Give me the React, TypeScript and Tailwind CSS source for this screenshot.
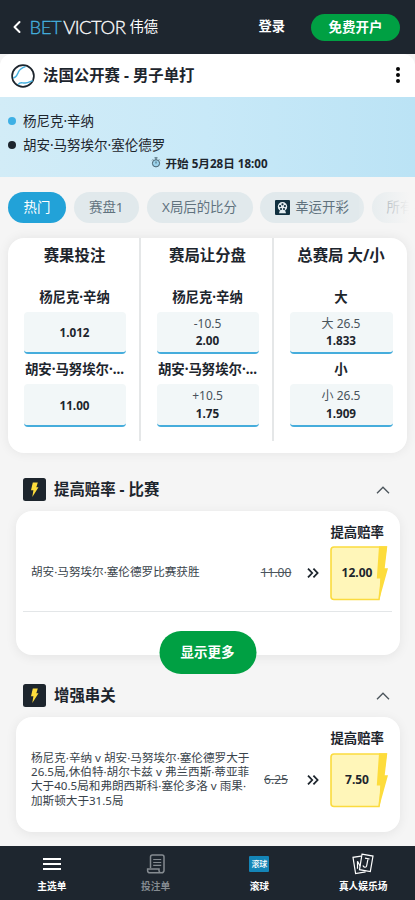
import { ChevronLeft } from 'lucide-react';

const markets = [
  {
    title: '赛果投注',
    picks: [
      { name: '杨尼克·辛纳', line: '', price: '1.012' },
      { name: '胡安·马努埃尔·...', line: '', price: '11.00' },
    ],
  },
  {
    title: '赛局让分盘',
    picks: [
      { name: '杨尼克·辛纳', line: '-10.5', price: '2.00' },
      { name: '胡安·马努埃尔·...', line: '+10.5', price: '1.75' },
    ],
  },
  {
    title: '总赛局 大/小',
    picks: [
      { name: '大', line: '大 26.5', price: '1.833' },
      { name: '小', line: '小 26.5', price: '1.909' },
    ],
  },
];

function TennisBall() {
  return (
    <svg className="w-6 h-6" viewBox="0 0 24 24" fill="none">
      <circle cx="12" cy="12" r="10.9" fill="#fff" stroke="#1d252d" strokeWidth="1.7" />
      <path d="M2.2 13.8C5.4 13.6 6.2 10.6 7.3 8.2C8.6 5 10.8 3.8 14.4 2.6" stroke="#45b0df" strokeWidth="1.5" />
      <path d="M7.2 20.6C9.4 17.2 11.4 19.4 14.2 19.1C17.6 18.8 19.2 17.4 21.8 16.6" stroke="#45b0df" strokeWidth="1.5" />
    </svg>
  );
}

function Stopwatch() {
  return (
    <svg className="w-[10px] h-[11px] -mt-[3px]" viewBox="0 0 10 11" fill="none" stroke="#47616e" strokeWidth="1">
      <circle cx="5" cy="6.3" r="3.6" fill="#9bd3ec" />
      <path d="M3.5 .8h3M5 1v1.7M5 4.5v2M8 2.4l.9.9M2 2.4l-.9.9" />
    </svg>
  );
}

function LuckyDraw() {
  return (
    <svg className="w-[15px] h-[15px]" viewBox="0 0 15 15">
      <rect width="15" height="15" rx="1" fill="#10303f" />
      <path d="M4 13.2l.8-2.4h5.4l.8 2.4z" fill="#e5eef2" />
      <circle cx="7.5" cy="6.8" r="4.7" fill="#e5eef2" />
      <circle cx="7.5" cy="4.3" r="1.1" fill="#10303f" />
      <circle cx="5.1" cy="6.1" r="1.1" fill="#10303f" />
      <circle cx="9.9" cy="6.1" r="1.1" fill="#10303f" />
      <circle cx="6" cy="9" r="1.1" fill="#10303f" />
      <circle cx="9" cy="9" r="1.1" fill="#10303f" />
    </svg>
  );
}

function BoltBadge() {
  return (
    <svg className="w-[23px] h-[23px]" viewBox="0 0 23 23">
      <rect width="23" height="23" rx="2.5" fill="#1d252d" />
      <path d="M9.8 4.5h5l-1.5 4.8h2.2L9.3 19l1.1-6.8H8z" fill="#fddc3c" />
    </svg>
  );
}

function BoostBox({ price }: { price: string }) {
  return (
    <div className="relative w-[58px] h-[55px] flex items-center">
      <svg className="absolute inset-0" width="58" height="55" viewBox="0 0 58 55">
        <path d="M4 1h52L49 53.5H4a3 3 0 0 1-3-3V4a3 3 0 0 1 3-3z" fill="#fff6b9" stroke="#fbdb3e" strokeWidth="1.6" />
        <path d="M49 .2H57.3L54.7 22.2H58L49.2 54L50.2 32.5H46.8z" fill="#fddc3c" />
      </svg>
      <span className="relative w-[54px] text-center text-[12px] font-bold">{price}</span>
    </div>
  );
}

function BoostRow({ text, oldPrice, price }: { text: string; oldPrice: string; price: string }) {
  return (
    <div className="flex items-center">
      <p className="w-[222px] -mt-[2px] text-[11.6px] leading-[14.4px] text-[#39434b]">{text}</p>
      <span className="w-[46px] text-center text-[12px] text-[#4b545b] line-through">{oldPrice}</span>
      <svg className="w-3 h-[10px] -mt-[1px] ml-[8px] mr-[11px]" viewBox="0 0 12 10" fill="none" stroke="#1d252d" strokeWidth="1.8">
        <path d="M1 .6L5.2 5L1 9.4M6.4 .6L10.6 5L6.4 9.4" />
      </svg>
      <BoostBox price={price} />
    </div>
  );
}

function SectionHead({ title }: { title: string }) {
  return (
    <div className="flex items-center h-[23px] pl-[23px] pr-[25px]">
      <BoltBadge />
      <h2 className="ml-2 flex-1 text-[15.4px] leading-[23px] font-bold">{title}</h2>
      <svg className="w-[14px] h-2" viewBox="0 0 14 8" fill="none" stroke="#4b545b" strokeWidth="1.3">
        <path d="M1 7.2L7 1.2L13 7.2" />
      </svg>
    </div>
  );
}

export default function App() {
  return (
    <div className="w-[415px] h-[900px] overflow-hidden flex flex-col bg-[#f5f5f5] text-[#1d252d] font-['Noto_Sans','Noto_Sans_CJK_SC',sans-serif]">
      {/* Top bar */}
      <header className="h-[54px] shrink-0 bg-[#1e262f] flex items-center pl-[7px] pr-[15px] text-white">
        <ChevronLeft size={20} strokeWidth={2.4} />
        <div className="ml-[2.5px] flex items-center flex-1">
          <span className="font-[Lato] font-light text-[18.5px] leading-none tracking-[-0.5px] [-webkit-text-stroke:0.3px]">
            <span className="text-[#45b0df]">BET</span>
            <span className="ml-[2px]">VICTOR</span>
          </span>
          <span className="ml-1 text-[14.3px] leading-none">伟德</span>
        </div>
        <span className="text-[13.3px] font-bold">登录</span>
        <button className="ml-[26px] w-[89px] h-[27px] rounded-full bg-[#00a043] text-[13.5px] font-bold">免费开户</button>
      </header>

      {/* Event */}
      <div className="h-[43px] shrink-0 bg-white rounded-t-xl flex items-center pl-[11px] pr-[13px]">
        <TennisBall />
        <h1 className="ml-2 flex-1 text-[15.4px] font-bold">法国公开赛 - 男子单打</h1>
        <svg className="w-[8px] h-4 -mt-[2px]" viewBox="0 0 8 16" fill="#050505">
          <circle cx="4" cy="2" r="2" />
          <circle cx="4" cy="8" r="2" />
          <circle cx="4" cy="14" r="2" />
        </svg>
      </div>
      <div className="h-20 shrink-0 bg-gradient-to-r from-[#d2ecf7] via-[#c8e9f8] to-[#bbe3f5] pt-3 text-[13.5px]">
        <div className="flex items-center h-6 pl-2 gap-[7px]">
          <span className="w-[8px] h-[8px] rounded-full bg-[#3eb0e5]" />
          杨尼克·辛纳
        </div>
        <div className="flex items-center h-6 pl-2 gap-[7px]">
          <span className="w-[8px] h-[8px] rounded-full bg-[#1d252d]" />
          胡安·马努埃尔·塞伦德罗
        </div>
        <div className="flex items-center justify-center gap-1 h-[14px] pl-[4px] text-[11.6px] font-bold">
          <Stopwatch />
          开始 5月28日 18:00
        </div>
      </div>

      {/* Tabs */}
      <nav className="relative shrink-0 mt-[15px] h-[31px] flex gap-[7.5px] pl-[8px] text-[13.4px] text-[#60727e] whitespace-nowrap overflow-hidden">
        <span className="w-[58px] shrink-0 rounded-full bg-[#22a2d8] text-white flex items-center justify-center">热门</span>
        <span className="w-[65.5px] shrink-0 rounded-full bg-[#e1e9ec] flex items-center justify-center">赛盘1</span>
        <span className="w-[106px] shrink-0 rounded-full bg-[#e1e9ec] flex items-center justify-center">X局后的比分</span>
        <span className="w-[104px] shrink-0 rounded-full bg-[#e1e9ec] flex items-center justify-center gap-[5px]">
          <LuckyDraw />
          幸运开彩
        </span>
        <span className="w-[90px] shrink-0 rounded-full bg-[#e1e9ec] flex items-center pl-[15px]">所有</span>
        <span className="absolute right-0 top-0 w-[56px] h-full bg-gradient-to-r from-[#f5f5f5]/10 to-[#f5f5f5] to-90%" />
      </nav>

      {/* Main markets */}
      <section className="shrink-0 mt-[15px] mx-2 h-[215px] bg-white rounded-2xl shadow-[0_0_12px_rgba(0,0,0,0.07)] flex">
        {markets.map((market) => (
          <div key={market.title} className="w-[133px] h-[203px] border-r-2 border-[#e5e7e8] last:border-r-0 last:pr-[14.5px] pl-[15.5px] pr-[13.5px] text-center">
            <h3 className="h-[46.5px] pt-[5.5px] text-[15.4px] leading-[24px] font-bold whitespace-nowrap">{market.title}</h3>
            {market.picks.map((pick) => (
              <div key={pick.name} className="mb-[3px]">
                <div className="h-[27px] leading-[25px] text-[13.4px] font-bold whitespace-nowrap">{pick.name}</div>
                <div className="h-[42.5px] rounded-[4px] border-b-2 border-[#46addc] bg-[#f2f7f8] flex flex-col justify-center pt-px text-[12px] leading-[16.5px]">
                  {pick.line && <span className="text-[#48535b]">{pick.line}</span>}
                  <span className="font-bold text-[11.7px]">{pick.price}</span>
                </div>
              </div>
            ))}
          </div>
        ))}
      </section>

      {/* Boosted prices */}
      <section className="shrink-0 mt-[25px] h-[206px]">
        <SectionHead title="提高赔率 - 比赛" />
        <div className="relative mt-[10px] mx-[15.5px] h-[144px] bg-white rounded-2xl shadow-[0_2px_12px_rgba(0,0,0,0.07)] pt-[11px] pl-[15.5px]">
          <div className="pr-[15.5px] text-right text-[13.4px] leading-5 font-bold">提高赔率</div>
          <div className="mt-[3.5px]">
            <BoostRow text="胡安·马努埃尔·塞伦德罗比赛获胜" oldPrice="11.00" price="12.00" />
          </div>
          <div className="-ml-2 mr-2 mt-[10.5px] border-t border-[#e3e6e8]" />
          <button className="absolute left-1/2 -translate-x-1/2 top-[120px] w-[97px] h-[43px] rounded-full bg-[#00a043] text-white text-[13.5px] font-bold">
            显示更多
          </button>
        </div>
      </section>

      <section className="shrink-0 h-[162px]">
        <SectionHead title="增强串关" />
        <div className="mt-[9.5px] mx-[15.5px] h-[115px] bg-white rounded-2xl shadow-[0_2px_12px_rgba(0,0,0,0.07)] pt-[11px] pl-[15.5px]">
          <div className="pr-[15.5px] text-right text-[13.4px] leading-5 font-bold">提高赔率</div>
          <div className="mt-[5px]">
            <BoostRow
              text="杨尼克·辛纳 v 胡安·马努埃尔·塞伦德罗大于26.5局,休伯特·胡尔卡兹 v 弗兰西斯·蒂亚菲大于40.5局和弗朗西斯科·塞伦多洛 v 雨果·加斯顿大于31.5局"
              oldPrice="6.25"
              price="7.50"
            />
          </div>
        </div>
      </section>

      {/* Bottom bar */}
      <footer className="h-[54px] shrink-0 grid grid-cols-4 bg-[#1e262f] text-white text-[9.7px] leading-[14px] font-bold text-center">
        <div className="flex flex-col items-center pt-[7px]">
          <svg className="w-[22px] h-[22px] mb-[5px]" viewBox="0 0 22 22" stroke="#fff" strokeWidth="2">
            <path d="M2 6h18M2 11h18M2 16h18" />
          </svg>
          主选单
        </div>
        <div className="flex flex-col items-center pt-[7px] text-[#858b91]">
          <svg className="w-[20px] h-[22px] mb-[5px]" viewBox="0 0 20 22" fill="none" stroke="#858b91" strokeWidth="1.5">
            <path d="M4.5 15V4a2 2 0 0 1 2-2H16a2 2 0 0 1 2 2v13.5a2.3 2.3 0 0 1-2.3 2.3H4a2.4 2.4 0 0 1-2.4-2.4V16H13v1.5a2.3 2.3 0 0 0 2.6 2.3" />
            <path d="M7.2 6.5h8M7.2 9.5h8M7.2 12.3h8" strokeWidth="1.2" />
          </svg>
          投注单
        </div>
        <div className="flex flex-col items-center pt-[10px]">
          <span className="w-5 h-4 mb-[8px] rounded-[1px] bg-[#1485b7] text-[8px] leading-4 font-medium">滚球</span>
          滚球
        </div>
        <div className="flex flex-col items-center pt-[7px]">
          <svg className="w-6 h-[22px] mb-[5px]" viewBox="0 0 24 22" fill="none" stroke="#fff" strokeWidth="1.2">
            <path d="M10 3.1L2 4.3l2.6 16.2 10-1.7" />
            <path d="M11 1.2l11 1.9-2.7 15.5-10.8-1.9z" />
            <path d="M14 5.2l4.6.8M17 5.8l-1.4 7.2c-.4 2-3.7 1.4-3.4-.7M6.5 15.8V8.2l2.7 5" />
          </svg>
          真人娱乐场
        </div>
      </footer>
    </div>
  );
}
